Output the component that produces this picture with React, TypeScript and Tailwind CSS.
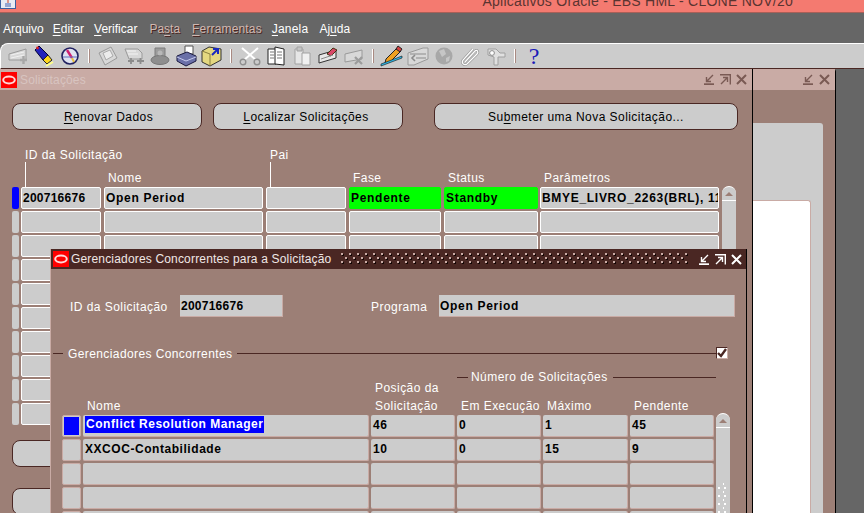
import type { ReactNode } from "react";

const FONT = "font-['Liberation_Sans',Arial,sans-serif]";

// main window table columns
const MAIN_COLS = ["w-[80px]", "w-[159px]", "w-[80px]", "w-[92px]", "w-[94px]", "w-[179px]"];
// dialog table columns
const DLG_COLS = ["w-[286px]", "w-[84px]", "w-[84px]", "w-[85px]", "w-[84px]"];

function OracleLogo() {
  return (
    <svg width="16" height="16" viewBox="0 0 16 16" className="shrink-0">
      <rect width="16" height="16" fill="#ff0000" />
      <ellipse cx="8" cy="8" rx="5.8" ry="3.4" fill="none" stroke="#ffd8d8" strokeWidth="2" />
    </svg>
  );
}

function WinButtons({ color, max = true }: { color: string; max?: boolean }) {
  return (
    <div className="flex items-center gap-[5px]">
      <svg width="11" height="11" viewBox="0 0 11 11" fill="none" stroke={color} strokeWidth="1.4">
        <path d="M0 10.2H10" strokeWidth="1.8" />
        <path d="M9 1L3 7M2.5 3V7.5H7" />
      </svg>
      {max && (
        <svg width="11" height="11" viewBox="0 0 11 11" fill="none" stroke={color} strokeWidth="1.4">
          <path d="M0 .8H10.3V10.5" />
          <path d="M1 10L7 4M3 3.5H7.5V8" />
        </svg>
      )}
      <svg width="11" height="11" viewBox="0 0 11 11" fill="none" stroke={color} strokeWidth="2">
        <path d="M1 1L10 10M10 1L1 10" />
      </svg>
    </div>
  );
}

function U({ children }: { children: ReactNode }) {
  return <span className="underline underline-offset-2">{children}</span>;
}

function MenuItem({ children, off, className }: { children: ReactNode; off?: boolean; className: string }) {
  return (
    <span
      className={`${className} text-[12px] ${off ? "text-[#d0b8b2] [text-shadow:1px_1px_0_#4a2723]" : "text-white"}`}
    >
      {children}
    </span>
  );
}

function Sep() {
  return <div className="mx-[5px] h-[14px] w-[2px] shrink-0 border-l border-white bg-[#a98a82]" />;
}

function Tool({ children }: { children: ReactNode }) {
  return (
    <svg width="26" height="22" viewBox="0 0 26 22" className="shrink-0">
      {children}
    </svg>
  );
}

const G = { fill: "#d8d8d8", stroke: "#9a9a9a" };

function Toolbar() {
  return (
    <div className="flex h-[26px] items-center rounded-tl-[8px] border-t border-b border-l border-t-white border-b-[#4a2723] border-l-white bg-[#cccccc] pl-[4px]">
      <Tool>
        <path d="M4 9L21 4V15H4Z" {...G} />
        <path d="M6 10L19 7M6 13L19 10" stroke="#f0f0f0" />
        <path d="M15 15H22M18.5 11V19" stroke="#a8a8a8" strokeWidth="2.4" />
      </Tool>
      <Tool>
        <path d="M4 5L8 1L17 10L12 15Z" fill="#2222bb" stroke="#000033" />
        <circle cx="6.5" cy="3" r="1.4" fill="#dd2222" />
        <path d="M12 15L17 10L21 15L16 19Z" fill="#ffd820" stroke="#222" />
        <path d="M15 21L22 17" stroke="#ffff88" strokeWidth="2" />
      </Tool>
      <Tool>
        <circle cx="13" cy="11" r="8" fill="#dfe2f0" stroke="#202060" strokeWidth="1.6" />
        <path d="M10 5L15 13" stroke="#d02070" strokeWidth="2.4" />
        <path d="M15 13L17 17" stroke="#e8c040" strokeWidth="2" />
        <path d="M6 12H20" stroke="#6070c0" />
      </Tool>
      <Sep />
      <Tool>
        <path d="M4 8L16 2L22 13L10 20Z" {...G} />
        <path d="M8 8L15 5L18 11L11 15Z" fill="#ececec" stroke="#aaa" />
      </Tool>
      <Tool>
        <path d="M4 4H17L21 8V14H8Z" {...G} />
        <path d="M6 6H15M7 9H17" stroke="#f4f4f4" />
        <path d="M7 16H13M16 16H23M10 13V19M19.5 13V19" stroke="#8c8c8c" strokeWidth="1.8" />
      </Tool>
      <Tool>
        <path d="M8 3H18V13H8Z" fill="#9c9c9c" stroke="#7c7c7c" />
        <ellipse cx="13" cy="15" rx="9" ry="4.5" fill="#8e8e8e" stroke="#777" />
        <circle cx="13" cy="8" r="2.5" fill="#b8b8b8" />
      </Tool>
      <Tool>
        <path d="M12 1H20V9H12Z" fill="#fff" stroke="#555" />
        <path d="M4 11L14 7L23 11V16L13 21L4 16Z" fill="#6a70a8" stroke="#1a1a40" />
        <path d="M4 12L13 16L23 12" fill="none" stroke="#c8ccee" />
      </Tool>
      <Tool>
        <path d="M3 6L10 2L22 4V15L11 21L3 17Z" fill="#e4d880" stroke="#333" />
        <path d="M3 6L11 9V21" fill="none" stroke="#8a8040" />
        <path d="M13 10L19 4M14 4H19V9" stroke="#1a2ac0" strokeWidth="2" fill="none" />
      </Tool>
      <Sep />
      <Tool>
        <path d="M5 3L19 15M21 3L7 15" stroke="#fff" strokeWidth="2" />
        <circle cx="6" cy="17" r="2.8" fill="none" stroke="#909090" strokeWidth="1.4" />
        <circle cx="20" cy="17" r="2.8" fill="none" stroke="#909090" strokeWidth="1.4" />
      </Tool>
      <Tool>
        <path d="M5 4H13V19H5Z" fill="#fff" stroke="#222" />
        <path d="M12 2L21 4V20L12 19Z" fill="#fff" stroke="#222" />
        <path d="M7 7H11M7 10H11M7 13H11M14 7H19M14 10H19M14 13H19" stroke="#777" />
      </Tool>
      <Tool>
        <path d="M6 4H14V19H6Z" fill="#e6e6e6" stroke="#a2a2a2" />
        <path d="M13 8H21V20H13Z" fill="#f0f0f0" stroke="#a2a2a2" />
        <path d="M8 2H13V6H8Z" fill="#c4c4c4" stroke="#a2a2a2" />
      </Tool>
      <Tool>
        <path d="M4 10L21 5V13L4 18Z" fill="#e8e8e8" stroke="#333" />
        <path d="M12 9L18 3L22 5L16 11Z" fill="#d84868" stroke="#431" />
        <path d="M6 14L18 10" stroke="#888" />
      </Tool>
      <Tool>
        <path d="M4 9L21 5V14L4 17Z" {...G} />
        <path d="M14 12L21 19M21 12L14 19" stroke="#9c9c9c" strokeWidth="2.2" />
      </Tool>
      <Sep />
      <Tool>
        <path d="M7 14L18 3L22 6L11 17L6 18Z" fill="#f0a020" stroke="#222" />
        <path d="M17 4L19 1L23 4L21 7Z" fill="#d84040" stroke="#222" />
        <path d="M2 19L23 11V13L2 21Z" fill="#30b8e8" stroke="#111" strokeWidth=".6" />
      </Tool>
      <Tool>
        <path d="M3 8L18 3H23V14L9 20H3Z" {...G} />
        <path d="M5 9H21M11 13H21" stroke="#8c8c8c" />
        <path d="M10 10L7 13L10 16" stroke="#8c8c8c" strokeWidth="1.6" fill="none" />
      </Tool>
      <Tool>
        <circle cx="13" cy="11" r="8.5" fill="#a8a8a8" />
        <path d="M8 6L13 4L15 9L11 12ZM15 13L19 11L18 16L15 17Z" fill="#c6c6c6" />
      </Tool>
      <Tool>
        <path d="M8 17L18 6C20 4 22 7 20 9L10 19C7 21 4 18 6 15L16 4" fill="none" stroke="#9a9a9a" strokeWidth="2.6" />
        <path d="M8 17L18 6C20 4 22 7 20 9L10 19C7 21 4 18 6 15L16 4" fill="none" stroke="#fff" strokeWidth="1.2" />
      </Tool>
      <Tool>
        <path d="M5 4H13L17 8H22V12H15V20H11V12L5 10Z" fill="#e0e0e0" stroke="#a0a0a0" />
        <circle cx="9" cy="8" r="2.4" fill="#fff" stroke="#8c8c8c" />
      </Tool>
      <Sep />
      <span className="w-[26px] shrink-0 text-center font-['Liberation_Serif',serif] text-[24px] leading-[22px] text-[#1a1ab8]">
        ?
      </span>
    </div>
  );
}

function Cell({ className, text, green }: { className: string; text?: string; green?: boolean }) {
  return (
    <div
      className={`${className} h-[22px] shrink-0 overflow-hidden rounded-[2px] border pl-[1px] text-[12px] leading-[20px] font-bold whitespace-nowrap text-black ${
        green ? "border-[#00ff00] bg-[#00ff00]" : "border-white bg-[#cccccc]"
      }`}
    >
      {text}
    </div>
  );
}

function Btn({ label, className }: { label: ReactNode; className: string }) {
  return (
    <div
      className={`${className} flex h-[27px] shrink-0 items-center justify-center rounded-[8px] border border-[#4a2723] bg-[#cccccc] text-[12px] tracking-[0.45px] text-black`}
    >
      {label}
    </div>
  );
}

function ScrollBar({ className }: { className: string }) {
  return (
    <div className={`${className} flex w-[14px] shrink-0 flex-col rounded-t-[7px] border-t border-white bg-[#cccccc]`}>
      <div className="flex h-[14px] items-center justify-center border-b border-white">
        <div className="h-0 w-0 border-x-[4px] border-b-[4px] border-x-transparent border-b-[#9c7f76]" />
      </div>
    </div>
  );
}

const MAIN_ROWS = Array.from({ length: 10 }, (_, i) => i);

function MainWindow() {
  return (
    <div className="absolute top-[69px] left-0 h-[460px] w-[753px] border-r border-black bg-[#9c7f76]">
      <div className="flex h-[21px] items-center bg-[#c9aba5] pr-[5px] pl-[1px]">
        <OracleLogo />
        <span className="ml-[3px] flex-1 text-[12px] tracking-[0.15px] text-[#d8c4c0]">Solicitações</span>
        <WinButtons color="#7a5a54" />
      </div>

      <div className="flex gap-[11px] pt-[13px] pl-[12px]">
        <Btn className="w-[190px] pl-[3px]" label={<><U>R</U>enovar Dados</>} />
        <Btn className="w-[190px] pr-[4px]" label={<><U>L</U>ocalizar Solicitações</>} />
        <Btn className="ml-[20px] w-[304px]" label={<>Su<U>b</U>meter uma Nova Solicitação...</>} />
      </div>

      <div className="mt-[17px] flex h-[40px] pl-[21px] text-[12px] tracking-[0.45px] text-white">
        <div className="ml-[4px] w-[79px] border-l border-white">
          <div className="-mt-[1px] -ml-[1px] h-[16px] bg-[#9c7f76] whitespace-nowrap">ID da Solicitação</div>
        </div>
        <div className="flex w-[166px] items-end pl-[4px]">Nome</div>
        <div className="w-[79px] border-l border-white">
          <div className="-mt-[1px] -ml-[1px] h-[16px] bg-[#9c7f76]">Pai</div>
        </div>
        <div className="flex w-[95px] items-end pl-[4px]">Fase</div>
        <div className="flex w-[96px] items-end pl-[4px]">Status</div>
        <div className="flex items-end pl-[4px]">Parâmetros</div>
      </div>

      <div className="flex">
        <div className="flex flex-col gap-[2px] pl-[12px]">
          {MAIN_ROWS.map((i) => (
            <div key={i} className="flex items-center gap-[2px]">
              <div className={`h-[22px] w-[7px] rounded-[2px] ${i === 0 ? "bg-[#0000ff]" : "bg-[#cccccc]"}`} />
              <Cell className={`${MAIN_COLS[0]} tracking-[0.25px]`} text={i === 0 ? "200716676" : ""} />
              <Cell className={`ml-[1px] tracking-[0.7px] ${MAIN_COLS[1]}`} text={i === 0 ? "Open Period" : ""} />
              <Cell className={`ml-[1px] ${MAIN_COLS[2]}`} />
              <Cell className={`ml-[1px] tracking-[0.7px] ${MAIN_COLS[3]}`} text={i === 0 ? "Pendente" : ""} green={i === 0} />
              <Cell className={`ml-[1px] tracking-[0.7px] ${MAIN_COLS[4]}`} text={i === 0 ? "Standby" : ""} green={i === 0} />
              <Cell className={`tracking-[0.7px] ${MAIN_COLS[5]}`} text={i === 0 ? "BMYE_LIVRO_2263(BRL), 118" : ""} />
            </div>
          ))}
        </div>
        <ScrollBar className="-mt-[1px] ml-[3px] h-[240px]" />
      </div>

      <div className="mt-[14px] flex flex-col gap-[21px] pl-[12px]">
        <Btn className="w-[190px]" label="" />
        <Btn className="w-[190px]" label="" />
      </div>
    </div>
  );
}

function BackWindow() {
  return (
    <div className="absolute top-[69px] left-[500px] h-[460px] w-[336px] rounded-tr-[3px] border-r border-black bg-[#9c7f76]">
      <div className="flex h-[21px] items-center justify-end bg-[#c9aba5] pr-[5px]">
        <WinButtons color="#7a5a54" max={false} />
      </div>
      <div className="mt-[33px] ml-[40px] h-[400px] w-[283px] rounded-tr-[3px] bg-[#cccccc] pt-[77px]">
        <div className="h-[320px] w-[271px] rounded-tr-[3px] border-t border-r border-[#c9aba5] bg-white" />
      </div>
    </div>
  );
}

const DLG_ROWS: { text: string[]; sel?: boolean }[] = [
  { text: ["Conflict Resolution Manager", "46", "0", "1", "45"], sel: true },
  { text: ["XXCOC-Contabilidade", "10", "0", "15", "9"] },
  { text: ["", "", "", "", ""] },
  { text: ["", "", "", "", ""] },
  { text: ["", "", "", "", ""] },
];

function Dialog() {
  return (
    <div className="absolute top-[249px] left-[50px] h-[280px] w-[697px] border-r border-l border-r-black border-l-[#c9aba5] bg-[#9c7f76]">
      <div className="flex h-[20px] items-center bg-[#4a2723] pr-[4px] pl-[2px]">
        <OracleLogo />
        <span className="ml-[2px] text-[12px] tracking-[0.17px] whitespace-nowrap text-[#f0e8e6]">
          Gerenciadores Concorrentes para a Solicitação
        </span>
        {/* grip texture of the active title bar */}
        <svg className="mr-[10px] ml-[10px] h-[12px] flex-1">
          <defs>
            <pattern id="grip" width="8" height="8" patternUnits="userSpaceOnUse">
              <rect x="1" y="1" width="2" height="2" fill="#140604" />
              <rect x="0" y="0" width="2" height="2" fill="#c9aba5" />
              <rect x="5" y="5" width="2" height="2" fill="#140604" />
              <rect x="4" y="4" width="2" height="2" fill="#c9aba5" />
            </pattern>
          </defs>
          <rect width="100%" height="100%" fill="url(#grip)" />
        </svg>
        <WinButtons color="#ffffff" />
      </div>

      <div className="mt-[26px] flex h-[22px] items-center text-[12px] tracking-[0.45px] text-white">
        <span className="mt-[2px] ml-[19px] w-[110px]">ID da Solicitação</span>
        <div className="h-[22px] w-[103px] border-r border-b border-[#c9aba5] bg-[#cccccc] pl-[1px] leading-[22px] font-bold tracking-[0.25px] text-black">
          200716676
        </div>
        <span className="mt-[2px] ml-[88px] w-[68px]">Programa</span>
        <div className="h-[22px] w-[296px] border-r border-b border-[#c9aba5] bg-[#cccccc] pl-[1px] leading-[22px] font-bold tracking-[0.7px] text-black">
          Open Period
        </div>
      </div>

      <div className="relative mt-[28px] flex h-[16px] items-center pl-[2px] text-[12px] tracking-[0.4px] text-white">
        <div className="h-px w-[10px] bg-[#4a2723]" />
        <span className="mx-[5px] mt-[1px] whitespace-nowrap">Gerenciadores Concorrentes</span>
        <div className="h-px w-[479px] bg-[#4a2723]" />
        <div className="-mt-[1px] flex h-[12px] w-[12px] items-center justify-center border border-t-[#4a2723] border-r-[#c9aba5] border-b-[#c9aba5] border-l-[#4a2723] bg-white">
          <svg width="10" height="10" viewBox="0 0 10 10">
            <path d="M1 5L4 8L9 1" fill="none" stroke="#4a2723" strokeWidth="2.4" />
          </svg>
        </div>
      </div>

      <div className="relative mt-[8px] h-[46px] text-[12px] tracking-[0.45px] text-white">
        <div className="flex h-[16px] items-center pl-[406px]">
          <div className="h-px w-[11px] bg-[#4a2723]" />
          <span className="mr-[5px] ml-[3px] whitespace-nowrap">Número de Solicitações</span>
          <div className="h-px w-[103px] bg-[#4a2723]" />
        </div>
        <div className="mt-[12px] flex h-[18px] items-end pl-[36px]">
          <span className="w-[288px]">Nome</span>
          <div className="relative w-[86px]">
            <span className="absolute bottom-[18px] left-0 whitespace-nowrap">Posição da</span>
            Solicitação
          </div>
          <span className="w-[86px] whitespace-nowrap">Em Execução</span>
          <span className="w-[87px]">Máximo</span>
          <span>Pendente</span>
        </div>
      </div>

      <div className="flex pl-[11px]">
        <div className="flex flex-col gap-[2px]">
          {DLG_ROWS.map((row, i) => (
            <div key={i} className="flex gap-[2px]">
              <div className="h-[22px] w-[19px] rounded-[2px] border border-[#c9aba5] bg-[#cccccc] p-[1px]">
                {row.sel && <div className="h-full w-full bg-[#0000ff]" />}
              </div>
              {DLG_COLS.map((w, j) => (
                <div
                  key={j}
                  className={`${w} h-[22px] rounded-[2px] border-r border-b border-[#c9aba5] bg-[#cccccc] pl-[2px] text-[12px] leading-[21px] font-bold tracking-[0.55px] whitespace-nowrap text-black`}
                >
                  {row.sel && j === 0 ? (
                    <span className="mt-[1px] inline-block bg-[#0000ff] pl-[1px] align-top leading-[17px] text-white">
                      {row.text[j]}
                    </span>
                  ) : (
                    row.text[j]
                  )}
                </div>
              ))}
            </div>
          ))}
        </div>
        <div className="relative -mt-[2px] ml-[2px]">
          <ScrollBar className="h-[110px]" />
          <svg className="absolute top-[70px] left-[2px] h-[34px] w-[10px]">
            <defs>
              <pattern id="thumb" width="6" height="8" patternUnits="userSpaceOnUse">
                <rect x="5" y="0" width="2" height="2" fill="#ffffff" />
                <rect x="0" y="4" width="2" height="2" fill="#ffffff" />
              </pattern>
            </defs>
            <rect width="100%" height="100%" fill="url(#thumb)" />
          </svg>
        </div>
      </div>
    </div>
  );
}

export default function App() {
  return (
    <div className={`${FONT} relative flex h-[513px] w-[864px] flex-col overflow-hidden bg-[#666666]`}>
      <div className="relative flex h-[13px] shrink-0 justify-end overflow-hidden border-b border-[#a86058] bg-[#f47a70] pr-[71px]">
        <svg width="16" height="9" viewBox="0 0 16 9" className="absolute top-0 left-0">
          <rect x=".5" y="-1" width="15" height="9.5" fill="#e8ecf4" stroke="#3a60a0" />
          <path d="M5 6H11M5 4H11" stroke="#4060b0" />
          <path d="M8 0V3" stroke="#d04020" />
        </svg>
        <span className="-mt-[8px] text-[14px] leading-[18px] tracking-[0.25px] whitespace-nowrap text-[#5a3430]">
          Aplicativos Oracle - EBS HML - CLONE NOV/20
        </span>
      </div>

      <div className="flex h-[30px] shrink-0 items-center pt-[2px]">
        <MenuItem className="ml-[3px]">Arquivo</MenuItem>
        <MenuItem className="ml-[9px]"><U>E</U>ditar</MenuItem>
        <MenuItem className="ml-[10px]"><U>V</U>erificar</MenuItem>
        <MenuItem off className="ml-[12px]">Pa<U>s</U>ta</MenuItem>
        <MenuItem off className="ml-[12px] tracking-[0.15px]"><U>F</U>erramentas</MenuItem>
        <MenuItem className="ml-[10px] tracking-[0.2px]"><U>J</U>anela</MenuItem>
        <MenuItem className="ml-[11px]">Aj<U>u</U>da</MenuItem>
      </div>

      <Toolbar />

      <BackWindow />
      <MainWindow />
      <Dialog />
    </div>
  );
}
